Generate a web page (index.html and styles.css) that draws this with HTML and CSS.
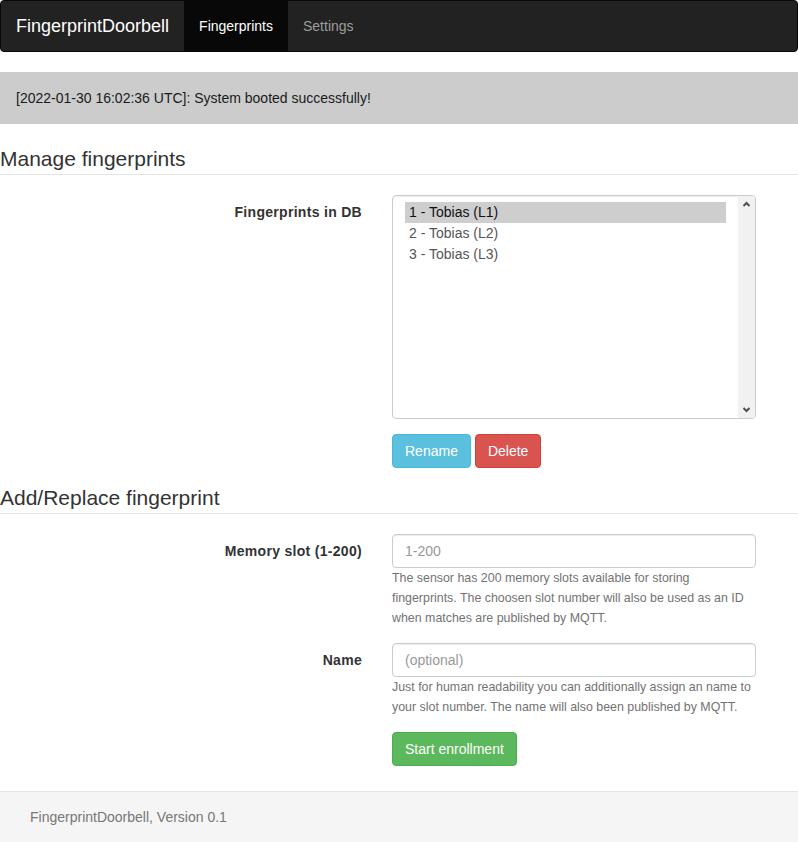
FILE: index.html
```html
<!DOCTYPE html>
<html>
<head>
<meta charset="utf-8">
<title>FingerprintDoorbell</title>
<link rel="stylesheet" href="styles.css">
</head>
<body>
<nav class="navbar">
  <a class="brand">FingerprintDoorbell</a>
  <a class="nav-link active">Fingerprints</a>
  <a class="nav-link">Settings</a>
</nav>
<div class="alert">[2022-01-30 16:02:36 UTC]: System booted successfully!</div>

<div class="legend">Manage fingerprints</div>
<div class="form-group">
  <div class="label-col">Fingerprints in DB</div>
  <div class="control-col">
    <div class="listbox">
      <div class="list">
        <div class="option selected">1 - Tobias (L1)</div>
        <div class="option">2 - Tobias (L2)</div>
        <div class="option">3 - Tobias (L3)</div>
      </div>
      <div class="scrollbar">
        <svg class="arrow" width="17" height="17" viewBox="0 0 17 17"><polyline points="5.5,10 8.5,7 11.5,10" fill="none" stroke="#505050" stroke-width="2"/></svg>
        <svg class="arrow" width="17" height="17" viewBox="0 0 17 17"><polyline points="5.5,7 8.5,10 11.5,7" fill="none" stroke="#505050" stroke-width="2"/></svg>
      </div>
    </div>
  </div>
</div>
<div class="form-group">
  <div class="label-col"></div>
  <div class="control-col buttons">
    <button class="btn btn-info">Rename</button>
    <button class="btn btn-danger">Delete</button>
  </div>
</div>

<div class="legend">Add/Replace fingerprint</div>
<div class="form-group">
  <div class="label-col">Memory slot (1-200)</div>
  <div class="control-col">
    <input class="form-control" type="text" placeholder="1-200">
    <small class="help">The sensor has 200 memory slots available for storing fingerprints. The choosen slot number will also be used as an ID when matches are published by MQTT.</small>
  </div>
</div>
<div class="form-group">
  <div class="label-col">Name</div>
  <div class="control-col">
    <input class="form-control" type="text" placeholder="(optional)">
    <small class="help">Just for human readability you can additionally assign an name to your slot number. The name will also been published by MQTT.</small>
  </div>
</div>
<div class="form-group">
  <div class="label-col"></div>
  <div class="control-col buttons">
    <button class="btn btn-success">Start enrollment</button>
  </div>
</div>

<footer class="footer">FingerprintDoorbell, Version 0.1</footer>
</body>
</html>
```
FILE: styles.css
```css
* { box-sizing: border-box; }
html, body { margin: 0; padding: 0; }
body {
  font-family: "Liberation Sans", Arial, sans-serif;
  font-size: 14px;
  line-height: 20px;
  color: #333;
  background: #fff;
}
.navbar {
  display: flex;
  height: 52px;
  background: #222;
  border: 1px solid #080808;
  border-radius: 4px;
  margin-bottom: 20px;
}
.brand {
  padding: 15px;
  font-size: 18px;
  line-height: 20px;
  height: 50px;
  color: #fff;
}
.nav-link {
  padding: 15px;
  line-height: 20px;
  height: 50px;
  color: #9d9d9d;
}
.nav-link.active {
  background: #080808;
  color: #fff;
}
.alert {
  background: #ccc;
  border: 1px solid #ccc;
  padding: 15px;
  margin-bottom: 20px;
  color: #1a1a1a;
}
.legend {
  font-size: 21px;
  line-height: 30px;
  color: #333;
  border-bottom: 1px solid #e5e5e5;
  margin-bottom: 20px;
}
.form-group {
  display: flex;
  margin-bottom: 15px;
}
.label-col {
  width: 377px;
  padding: 7px 15px 0;
  text-align: right;
  font-weight: bold;
  letter-spacing: 0.3px;
}
.control-col {
  width: 394px;
  padding: 0 15px;
}
.buttons {
  display: flex;
  gap: 4px;
}
.listbox {
  display: flex;
  height: 224px;
  border: 1px solid #ccc;
  border-radius: 4px;
  overflow: hidden;
  box-shadow: inset 0 1px 1px rgba(0,0,0,.075);
}
.list {
  flex: 1;
  padding: 6px 12px;
}
.option {
  height: 21px;
  line-height: 21px;
  padding: 0 4px;
  color: #555;
}
.option.selected {
  background: #cecece;
  color: #111;
}
.scrollbar {
  width: 17px;
  background: #f1f1f1;
  display: flex;
  flex-direction: column;
  justify-content: space-between;
}
.arrow { display: block; }
.btn {
  font-family: inherit;
  font-size: 14px;
  line-height: 20px;
  padding: 6px 12px;
  border: 1px solid transparent;
  border-radius: 4px;
  color: #fff;
}
.btn-info { background: #5bc0de; border-color: #46b8da; }
.btn-danger { background: #d9534f; border-color: #d43f3a; }
.btn-success { background: #5cb85c; border-color: #4cae4c; }
.form-control {
  display: block;
  width: 100%;
  height: 34px;
  padding: 6px 12px;
  font-family: inherit;
  font-size: 14px;
  line-height: 20px;
  color: #555;
  border: 1px solid #ccc;
  border-radius: 4px;
  box-shadow: inset 0 1px 1px rgba(0,0,0,.075);
}
.form-control::placeholder { color: #999; }
.help {
  display: block;
  font-size: 12.4px;
  line-height: 20px;
  color: #737373;
}
.footer {
  margin-top: 25px;
  background: #f5f5f5;
  border-top: 1px solid #e5e5e5;
  padding: 15px 30px 25px;
  color: #777;
}
```
